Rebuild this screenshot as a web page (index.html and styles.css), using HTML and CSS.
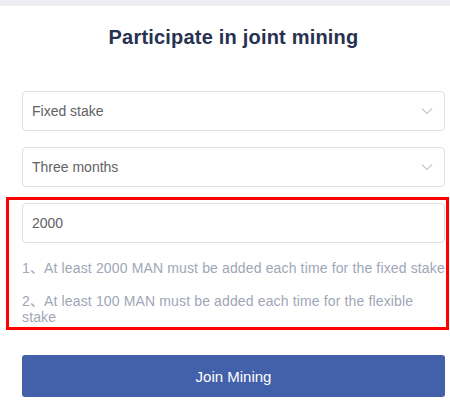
FILE: index.html
```html
<!DOCTYPE html>
<html lang="en">
<head>
<meta charset="utf-8">
<title>Participate in joint mining</title>
<link rel="stylesheet" href="styles.css">
</head>
<body>
<div class="topbar"></div>
<main class="panel">
  <h1 class="title">Participate in joint mining</h1>
  <div class="field select">
    <span class="value">Fixed stake</span>
    <svg class="chev" width="12" height="12" viewBox="0 0 12 12"><polyline points="0.8,3.3 6,8.5 11.2,3.3" fill="none" stroke="#c0c4cc" stroke-width="1.1"/></svg>
  </div>
  <div class="field select">
    <span class="value">Three months</span>
    <svg class="chev" width="12" height="12" viewBox="0 0 12 12"><polyline points="0.8,3.3 6,8.5 11.2,3.3" fill="none" stroke="#c0c4cc" stroke-width="1.1"/></svg>
  </div>
  <div class="group">
    <div class="field input"><span class="value">2000</span></div>
    <p class="hint">1、At least 2000 MAN must be added each time for the fixed stake</p>
    <p class="hint">2、At least 100 MAN must be added each time for the flexible stake</p>
    <div class="highlight"></div>
  </div>
  <button class="join">Join Mining</button>
</main>
</body>
</html>
```
FILE: styles.css
```css
* { box-sizing: border-box; }
html, body {
  margin: 0;
  padding: 0;
  background: #fff;
  font-family: "Liberation Sans", Arial, "Noto Sans CJK SC", sans-serif;
}
.topbar {
  height: 6px;
  background: #eceef3;
}
.panel {
  margin: 0 5px 0 22px;
  display: flex;
  flex-direction: column;
}
.title {
  margin: 17px 0 40px;
  font-size: 20px;
  line-height: 28px;
  font-weight: bold;
  letter-spacing: 0.2px;
  text-align: center;
  color: #283150;
}
.field {
  height: 40px;
  border: 1px solid #dcdfe6;
  border-radius: 4px;
  display: flex;
  align-items: center;
  padding: 0 11px 0 9px;
  font-size: 14px;
  color: #606266;
}
.select + .select { margin-top: 16px; }
.select .value { flex: 1; }
.chev { display: block; }
.group {
  position: relative;
  margin-top: 16px;
}
.hint {
  margin: 17px 0 0;
  font-size: 14px;
  line-height: 16px;
  letter-spacing: 0.14px;
  color: #9fa6b7;
}
.highlight {
  position: absolute;
  left: -16px;
  right: -4px;
  top: -6px;
  bottom: -5px;
  border: 3px solid #f00;
  pointer-events: none;
}
.join {
  margin-top: 30px;
  height: 42px;
  border: none;
  border-radius: 3px;
  background: #4360aa;
  color: #fff;
  font-family: inherit;
  font-size: 15px;
}
```
